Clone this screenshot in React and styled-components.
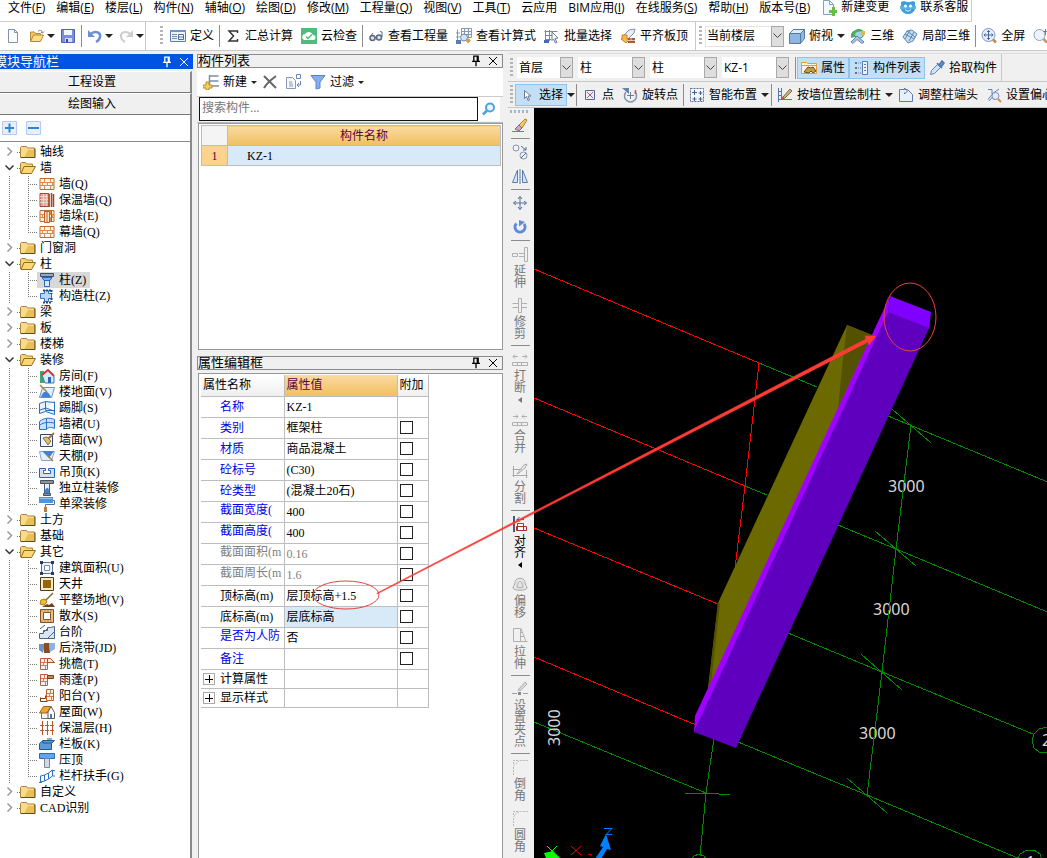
import React from 'react';
import styled, { createGlobalStyle } from 'styled-components';

const GlobalStyle = createGlobalStyle`
  * { box-sizing: border-box; }
  html, body, #root { height: 100%; }
  body {
    margin: 0;
    overflow: hidden;
    background: #f0f0f0;
    color: #000;
    font: 12px/16px "Open Sans", "Noto Sans CJK SC", sans-serif;
  }
  button, input, select { font: inherit; color: inherit; margin: 0; }
  ul { list-style: none; margin: 0; padding: 0; }
`;

const song = '"Liberation Serif", "Noto Sans CJK SC", serif';

/* ---------- icons ---------- */

const bricks = (
  <>
    <path d="M1 2.5h14v11H1z" fill="#fff3e6" stroke="#c06a2c" />
    <path d="M1 6.5h14M1 9.5h14M5.5 3v3M11.5 3v3M8.5 7v3M3.5 7v3M13.5 7v3M5.5 10v3M11.5 10v3" stroke="#d98c55" fill="none" />
  </>
);

const balcony = (
  <>
    <path d="M1.5 2.5h7v11h-7z" fill="#fff0e4" stroke="#b8622f" />
    <path d="M2 6.5h6M2 9.5h6M5.5 3v3M4.5 7v3M6.5 10v3" stroke="#cf8050" fill="none" />
  </>
);

const glyphs = {
  page: <path d="M3.5 1.5h6l3 3v10h-9zM9.5 1.5v3h3" fill="#fdfeff" stroke="#7f93ab" />,
  open: (
    <>
      <path d="M1.5 13V4h4l1 1.5h5V8" fill="#f3c765" stroke="#b58a34" />
      <path d="M1.5 13.5 4.5 7h10l-3 6.500z" fill="#ffdc86" stroke="#b58a34" />
      <path d="M9 3.5c2-2 4-1 4.5 1M12 4l1.5 1L15 3.5" stroke="#6c7f94" fill="none" />
    </>
  ),
  save: (
    <>
      <path d="M1.5 1.5h13v13h-13z" fill="#7a90dc" stroke="#5064b4" />
      <path d="M4 2h8v5H4z" fill="#f4f7ff" />
      <path d="M5 10h7v4H5z" fill="#d7dcf0" />
      <path d="M6 11h2v3H6z" fill="#3a4a92" />
    </>
  ),
  undo: (
    <>
      <path d="M4 5.5c5-3 10-1 9 3.5-.5 2.5-2 4-4 5" stroke="#6b8fd4" strokeWidth="2.5" fill="none" />
      <path d="M1 2v7h7z" fill="#6b8fd4" />
    </>
  ),
  redo: (
    <>
      <path d="M12 5.5C7 2.5 2 4.5 3 9c.5 2.5 2 4 4 5" stroke="#cdcdcd" strokeWidth="2" fill="none" />
      <path d="M15 2v7H8z" fill="#cdcdcd" />
    </>
  ),
  define: (
    <>
      <path d="M.5 2.5h15v11H.5z" fill="#eef4fd" stroke="#5f7db4" />
      <path d="M0 2h16v2H0z" fill="#6a92d8" />
      <path d="M2 6.5h5M2 8.5h5M2 10.5h5" stroke="#7d8ea8" />
      <path d="M8.5 6.500h5v5h-5zM9 9h4" fill="#fff" stroke="#4a6ab0" />
    </>
  ),
  sigma: <path d="M12.5 5V3H4l4.500 5L4 13h8.500v-2" fill="none" stroke="#333" strokeWidth="1.5" />,
  cloud: (
    <>
      <path d="M0 0h16v16H0z" fill="#4fbb7c" />
      <path d="M4.5 12a3 3 0 0 1-.5-6 4.500 4.500 0 0 1 8 1 2.500 2.500 0 0 1 0 5z" fill="#fff" />
      <path d="m5 8.500 2 2 4-4" stroke="#4fbb7c" strokeWidth="1.5" fill="none" />
    </>
  ),
  glasses: (
    <>
      <circle cx="4.500" cy="10" r="2.500" fill="#dce6f0" stroke="#5c6978" strokeWidth="1.5" />
      <circle cx="11" cy="9.500" r="2.500" fill="#dce6f0" stroke="#5c6978" strokeWidth="1.5" />
      <path d="M7 10l2-1M2 9l3-4M14 9V4l-2-.5" stroke="#5c6978" fill="none" />
    </>
  ),
  formula: (
    <>
      <path d="M1.5 1.5v12M5.5.5h10v9h-10z" fill="#f7fafe" stroke="#8a98ac" />
      <path d="M6 3.5h9M8.5 1v8M12.5 1v8M6 6.500h9M0 5h4M0 9h4" stroke="#8a98ac" />
      <circle cx="8" cy="9.500" r="3.500" fill="#cfe4f7" stroke="#6c88ac" />
      <path d="M0 12h5v4H0z" fill="#5c79bc" />
      <path d="m12 10 3 2.500-3 3-2-2.500z" fill="#d79a4a" />
    </>
  ),
  batch: (
    <>
      <path d="M1.5 2v12M.5 3.500h13M1 7.500h7M1 11.500h6M5.500 2v11" stroke="#7487a4" fill="none" />
      <path d="M0 12h5v3H0z" fill="#4b68b8" />
      <path d="m8 4 6 6-3 .5 2 4-1.500.5-2-4L8 12.500z" fill="#fff" stroke="#6d7a90" />
    </>
  ),
  level: (
    <>
      <path d="m3 8 6-6 6-1-1 4-6 6z" fill="#e8edf6" stroke="#8092ac" />
      <path d="M2 7h5v4h3l-4 4-5-4h1z" fill="#f6b94b" stroke="#c98424" />
      <path d="M8 10h7v5H8z" fill="#a35c3c" />
      <path d="M8 12.500h7M11 10v2" stroke="#e8c6b2" />
    </>
  ),
  cube: (
    <>
      <path d="m.5 5.500 4-4h11v9l-4 5H.5z" fill="#8db7e2" stroke="#557ba4" />
      <path d="m.5 5.500 4-4h11l-4 4z" fill="#dcecfb" stroke="#557ba4" />
      <path d="M11.5 5.500v10" stroke="#557ba4" />
    </>
  ),
  orbit: (
    <>
      <circle cx="9" cy="6" r="4.500" fill="#9ed8dc" stroke="#3f8f68" />
      <path d="M1 6c3-6 12-6 14-1-3-2-8-2-10 1v3L1 10z" fill="#54a964" />
      <path d="m1 14 6-6 7 6-2 1.500-5-4-4 4z" fill="#a9c2e6" stroke="#6884b4" />
      <path d="M11 3h4v4h-4z" fill="#e6b450" />
    </>
  ),
  partial: (
    <>
      <path d="m1 9 4-6 5-1 5 4-4 7-5 2z" fill="#c3dcf4" stroke="#5f86b4" />
      <path d="m3 6 9 5M5 3l8 6M8 2l-5 9M12 4l-5 9" stroke="#5f86b4" fill="none" />
    </>
  ),
  full: (
    <>
      <circle cx="7.500" cy="7" r="6.500" fill="#e4edfa" stroke="#8396b8" />
      <path d="M7.500 2.500v9M3 7h9M6 4l1.500-1.500L9 4M6 10l1.500 1.500L9 10M4.500 5.500 3 7l1.500 1.500M10.500 5.500 12 7l-1.500 1.500" stroke="#4868a4" fill="none" />
      <path d="m12 11.500 3 3" stroke="#c2894e" strokeWidth="2.500" />
    </>
  ),
  zoomIn: (
    <>
      <circle cx="6.500" cy="7" r="5.500" fill="#edf4fb" stroke="#8ea2bd" />
      <path d="M10 3.500h6M12.500 1v6" stroke="#6a7fa4" />
      <path d="m10.500 11 3.500 3.500" stroke="#cb9557" strokeWidth="2.500" />
    </>
  ),
  change: (
    <>
      <path d="M2.500.5h6l4 4v10h-10zM8.500.5v4h4" fill="#f2f9fe" stroke="#7ca4c4" />
      <path d="M8 10h3V7h3v3h2v3h-2v3h-3v-3H8z" fill="#65c043" />
    </>
  ),
  service: (
    <>
      <path d="m1 2 3-1 3 1h3l3-1 2 1v6c0 4-4 6-7 6s-7-2-7-6z" fill="#3d9ee0" />
      <path d="M0 6h16v3H0z" fill="#57b0ea" />
      <circle cx="5.500" cy="6" r="1.500" fill="#fff" />
      <circle cx="10.500" cy="6" r="1.500" fill="#fff" />
      <path d="M5 9.500c2 2 4 2 6 0" stroke="#fff" fill="none" />
    </>
  ),
  props: (
    <>
      <path d="M.5 13.500v-11h5l1 1h9v10z" fill="#fff3d8" stroke="#e59c35" />
      <path d="M1 5.500h14" stroke="#e59c35" />
      <path d="m3 12 4-5 3 1 2-1 3 4-3 2-2-2-2 2z" fill="#c4a03c" stroke="#5c5030" />
    </>
  ),
  list: (
    <>
      <path d="M2 2h2v2H2zM2 7h2v2H2zM2 12h2v2H2z" fill="#5f7290" />
      <path d="M5 3h3M5 8h3M5 13h3" stroke="#5f7290" strokeDasharray="1 1" />
      <path d="M9.500 1.500h5v13h-5z" fill="#eef4fd" stroke="#5878b4" />
      <path d="M11 4.500h2M11 7.500h2M11 10.500h2" stroke="#5878b4" />
    </>
  ),
  pick: (
    <>
      <path d="m1.500 14.500 1-4 6-6 3 3-6 6z" fill="#cfe3f5" stroke="#6486ac" />
      <path d="m8 3 5 5M10 5l3-4 2 2-3 4z" stroke="#4d78b0" strokeWidth="1.5" fill="#6b98d0" />
    </>
  ),
  cursor: <path d="M5.500 3.500v8l2-2 1.500 4 1.500-.5-1.500-4h3z" fill="#fff" stroke="#6d7c92" />,
  point: (
    <>
      <path d="M3.500 3.500h9v9h-9z" fill="#eaf0fa" stroke="#4e68a2" />
      <path d="m5 5 6 6M11 5l-6 6" stroke="#cf5564" />
    </>
  ),
  rotatePoint: (
    <>
      <path d="M4 5a6 6 0 1 0 9 0" stroke="#8292ac" strokeWidth="1.5" fill="none" />
      <path d="M0 1h7v6z" fill="#6681ac" />
      <path d="M8.500 5v7M5 8.500h7" stroke="#6b7890" />
      <path d="M13.500 3v4" stroke="#d44" strokeWidth="1.5" />
    </>
  ),
  smart: (
    <>
      <path d="M1.500 1.500h13v13h-13z" stroke="#5c6f8e" strokeDasharray="2 1" fill="#f4f8fd" />
      <path d="M5.500 3v5M3 5.500h5M11.500 4v4M9.500 6h4M5.500 10v4M3.500 12h4M11.500 10v4M9.500 12h4" stroke="#44608c" />
    </>
  ),
  drawWall: (
    <>
      <path d="M1.500 1v14M4.500 1v11M1 4.500h4M1 8.500h4M1 12.500h14" stroke="#5777b4" />
      <path d="m6 10 7-8 2 2-7 7-3 1z" fill="#c9b47c" stroke="#7c6e44" />
      <path d="m5 12 1-2" stroke="#d44" strokeWidth="2" />
    </>
  ),
  endAdjust: <path d="M1.500 14.500v-12h5V1l3 3-3 3V5.500M6.500 2.500h3l5 5v7h-13" fill="#eaf0fa" stroke="#6078b0" />,
  offset: (
    <>
      <path d="M2 2.500h4v5l-4 5M6 7l7-5M3 14l7-8M7 9h4v3H7z" stroke="#6480b2" fill="none" />
      <circle cx="9.500" cy="9" r="3.500" fill="#e2ecf8" stroke="#7f94b6" />
      <path d="m12 12 3 3" stroke="#cf9148" strokeWidth="2" />
    </>
  ),
  create: (
    <>
      <path d="M6.500 1v12M6.500 2h9M6.500 7h9M9 12h7" stroke="#7e8ea6" strokeWidth="1.5" />
      <path d="M3 8h3v3h3v3H6v2H3v-2H0v-3h3z" fill="#f5cf56" stroke="#b98f2a" />
    </>
  ),
  remove: <path d="M2 2c3 3 8 8 12 12M14 2C10 5 5 9 2 14" stroke="#666" strokeWidth="2" fill="none" />,
  copyTo: (
    <>
      <path d="M.5 3.500h6l3 3v8h-9zM3 10h4M3 12h4M3 8h3" fill="#f4f7fc" stroke="#8b98ae" />
      <path d="M10.500.5h4v4h-4zM14.500 7v4h-3m1.500-2-2 2 2 2" fill="none" stroke="#6c84b8" />
    </>
  ),
  filter: <path d="M1 1.500h14L10 8v6l-4 1V8z" fill="#86aef0" stroke="#5a82cc" />,
  search: (
    <>
      <circle cx="9" cy="6.500" r="4" fill="#eaf6fd" stroke="#4da3dc" strokeWidth="2" />
      <path d="m6 9.500-4 4" stroke="#4da3dc" strokeWidth="2.500" />
    </>
  ),
  pin: <path d="M5.500 2.500h5v6h-5zM9.500 2.500v6M3.500 8.500h9M8 9v5" fill="none" stroke="currentColor" strokeWidth="1.5" />,
  close: <path d="m4 4 8 8M12 4l-8 8" stroke="currentColor" />,
  plus: (
    <>
      <path d="M.5 1.500h14v13H.5z" fill="#e6eefc" stroke="#b9c9ee" />
      <path d="M3 8h9M7.500 3.500v9" stroke="#2c86c8" strokeWidth="2" />
    </>
  ),
  minus: (
    <>
      <path d="M.5 1.500h14v13H.5z" fill="#e6eefc" stroke="#b9c9ee" />
      <path d="M2 8h11" stroke="#2c86c8" strokeWidth="2" />
    </>
  ),
  folder: (
    <>
      <path d="M.5 13.500v-10l1-1h5l1 1.500h7v9.500z" fill="#f8dc8c" stroke="#a98738" />
      <path d="M8 6h7v8H4z" fill="#dca72e" opacity=".55" />
      <path d="M1 13.500h14v-9" stroke="#5e4a1c" fill="none" />
    </>
  ),
  folderOpen: (
    <>
      <path d="M.5 13V3.500l1-1h4l1 1.500h6V7" fill="#f6d47a" stroke="#a98738" />
      <path d="m1 13.500 3-7h11.500l-4 7z" fill="#fbd773" stroke="#8d6d22" />
    </>
  ),
  wall: bricks,
  insulWall: (
    <>
      <path d="M1 1.500h9v13H1z" fill="#e0a89a" stroke="#a04a3c" />
      <path d="M1 4.500h9M1 7.500h9M1 10.500h9M4.500 2v12M7.500 2v12" stroke="#f0d0c8" />
      <path d="M10 2v13M12.500 1v14M14.500 2v13" stroke="#9a4a24" strokeWidth="1.5" />
    </>
  ),
  pier: (
    <>
      {bricks}
      <path d="M5.500 3.500h5v11h-5z" fill="#fbe6d2" stroke="#c05c24" />
      <path d="M8 4v10M12.500 3v11" stroke="#c05c24" />
    </>
  ),
  column: (
    <>
      <path d="M1.500 1.500h13v3h-13z" fill="#9aa8bc" stroke="#3a4f70" />
      <path d="M5.500 5.500h5v9h-5z" fill="#dbe8fb" stroke="#2468c4" />
      <path d="M3 5.500h10l-2 3H5z" fill="#7eaef0" stroke="#2468c4" />
    </>
  ),
  tieColumn: (
    <>
      <path d="M5.500 2.500h4v3h3v5h-3v3h-4v-3h-4v-5h4z" fill="#bcd6f6" stroke="#3070c0" />
      <path d="M4 2.500h8M4 14.500h8M12.500 2v4M12.500 10v4" stroke="#23467e" strokeWidth="2" strokeDasharray="2 1" />
    </>
  ),
  room: (
    <>
      <path d="M1 3h4v12H1z" fill="#3fa768" />
      <path d="m3 7 6-5 6 6v7H6z" fill="#d7ecfb" stroke="#3678b4" />
      <path d="m3 7 6-5 6 6" stroke="#d43535" strokeWidth="2" fill="none" />
      <path d="M9 9h3v6H9z" fill="#2d67b8" />
    </>
  ),
  floor: (
    <>
      <path d="M3.500 3.500h12l-3 10H.5z" fill="#e3effd" stroke="#6c8ec0" />
      <path d="M2 13c2-7 7-7 10 0z" fill="#3f80d8" />
      <path d="m1 1 7 7" stroke="#a8823c" strokeWidth="1.5" />
    </>
  ),
  skirting: <path d="M.5 13.500v-10l6-2v9l9 .01v-9M6.500 1.500l9 1v12l-9-3-6 2M1 10l6-2 8 3" fill="#e6f1fd" stroke="#2970c4" />,
  dado: (
    <>
      <path d="M.5 5.500c5-4 10-4 15-2v9c-4-2-7-1-8 1H.5z" fill="#c8e2fb" stroke="#2970c4" />
      <path d="M1 9c4-3 9-3 14-2M7.500 3v10" stroke="#2970c4" fill="none" />
    </>
  ),
  wallFace: (
    <>
      <path d="M1.500 2.500h12v12h-12z" fill="#f2f6fd" stroke="#39486a" />
      <path d="m15 1-6 6" stroke="#9b7432" strokeWidth="2" />
      <path d="m4 6 4-1 4 4-3 4z" fill="#d8bd7c" stroke="#8b7238" />
    </>
  ),
  ceiling: (
    <>
      <path d="M.5 3.500h15l-3 9h-10z" fill="#e3effd" stroke="#87a4cf" />
      <path d="M3 3h12l-5 7z" fill="#3f80d8" />
      <path d="m8 7 6 6" stroke="#a8823c" strokeWidth="1.5" />
    </>
  ),
  hung: <path d="M.5 4.500h6v2h-2v3h7v-3h-2v-2h6v9H.5z" fill="#cfe4fb" stroke="#2266b8" />,
  soloColumn: (
    <>
      <path d="M1.500.5h13v3h-13zM4.500 13.500h7v2h-7z" fill="#8b929c" stroke="#44505e" />
      <path d="M5.500 3.500h5v10h-5z" fill="#e9eef6" stroke="#515c6c" />
      <path d="M6 10c2-3 3-3 4 0v3H6z" fill="#3f80d8" />
    </>
  ),
  beam: (
    <>
      <path d="M0 1h14v6H0z" fill="#4f93dc" />
      <path d="M1 2.500h12" stroke="#9dc4ef" />
      <path d="M14 4.500h1.500v4h-9v3" stroke="#5f6e80" fill="none" />
      <path d="M5 11h3v5H5z" fill="#b77d45" />
    </>
  ),
  area: (
    <>
      <path d="M2.500 2.500h11v11h-11z" fill="#edf3fb" stroke="#5d7495" />
      <path d="M5.500 5.500h5v5h-5z" fill="#fff" stroke="#7890b0" />
      <path d="M1 1h3v3H1zM12 1h3v3h-3zM1 12h3v3H1zM12 12h3v3h-3z" fill="#2a3b56" />
    </>
  ),
  patio: (
    <>
      <path d="M1.500 1.500h13v13h-13z" fill="#f6e8c8" stroke="#4f3c18" />
      <path d="M4 4h8v8H4z" fill="#946608" />
    </>
  ),
  site: (
    <>
      <path d="m14 1-8 8" stroke="#7a6a34" strokeWidth="1.5" />
      <path d="m2 8 4-1 2 3-3 3-4-1z" fill="#f2bf2f" stroke="#a47c14" />
      <path d="M3 15h13l-3-4-3 2-2-1z" fill="#6d4322" />
    </>
  ),
  apron: (
    <>
      <path d="M1.500 1.500h13v13h-13z" fill="#edc08a" stroke="#7f5426" />
      <path d="M4.500 4.500h7v7h-7z" fill="#fff" stroke="#7f5426" />
      <path d="M2 3h12M2 13h12" stroke="#b98850" strokeDasharray="2 1" />
    </>
  ),
  steps: (
    <>
      <path d="M.5 14.500v-5h4v-3h4v-3h3l4-1v12z" fill="#dce6f2" stroke="#4d6382" />
      <path d="m1 5 5-4M5 8l5-5M9 14l6-6" stroke="#4d6382" />
    </>
  ),
  pour: (
    <>
      <path d="M0 4h6l-2 9-4-3z" fill="#6f90c6" />
      <path d="M10 3h6v6l-5 3z" fill="#8fb0e4" />
      <path d="M5 3h5l1 10H5z" fill="#8a4a22" />
    </>
  ),
  eave: (
    <>
      {balcony}
      <path d="M8.500 2.500h3l4 4h-7z" fill="#fbe3d0" stroke="#99501f" />
    </>
  ),
  canopy: (
    <>
      {balcony}
      <path d="M8.500 3.500h6v3h-6z" fill="#c98555" stroke="#7c3c14" />
    </>
  ),
  balcony: (
    <>
      <g transform="translate(6 -1)">{balcony}</g>
      <path d="M1.500 9.500v4h7M1.500 10.500h5v-3" fill="none" stroke="#7c3c14" />
    </>
  ),
  roof: (
    <>
      <path d="M2.500 8h9v6.500h-9z" fill="#f3f3f3" stroke="#6e6e6e" />
      <path d="m.5 9 4-6.500H12l-4 6.500z" fill="#f2a532" stroke="#9f6312" />
      <path d="m12 2.500 3.500 6v6H9V8z" fill="#fff" stroke="#595959" />
      <path d="M11 10h2v5h-2z" fill="#4c78b0" />
    </>
  ),
  insulation: <path d="M3.500 1v14M8.500 1v14M13.500 1v14M1 5.500h14M1 10.500h14" stroke="#b9562c" strokeDasharray="4 1" />,
  slab: (
    <>
      <path d="M.5 7.500 4 4.500h11.500l-3 3v6H.5z" fill="#5d99d8" stroke="#27588e" />
      <path d="M4 4.500V7h9M8 3h5" stroke="#27588e" fill="none" />
    </>
  ),
  coping: (
    <>
      <path d="M.5 1.500h15v5H.5z" fill="#62a5ea" stroke="#2a6ab4" />
      <path d="M5.500 6.500h5v9h-5z" fill="#d5d8dc" stroke="#7c8692" />
    </>
  ),
  rail: <path d="M1.500 14V8l4-1v6zM5.500 7l4-2v6l-4 2M9.500 5l4-3v6l-4 3M12 2.500h4M13.500 8h2.500M0 14.500h3" stroke="#2b6fc8" fill="none" />,
  brush: (
    <>
      <path d="m7 8 6-6 2 1-5 8z" fill="#f2c968" stroke="#a88432" />
      <path d="m3 12 4-4 3 3-3 3z" fill="#e3a2b4" stroke="#6b6b9c" />
      <path d="M0 14.500h12" stroke="#6480b4" />
    </>
  ),
  copyShape: (
    <>
      <circle cx="4" cy="4" r="3" fill="#eef3f8" stroke="#8093ab" />
      <circle cx="11.500" cy="11.500" r="3.500" fill="#eef3f8" stroke="#8093ab" />
      <path d="m9 2 5 4m0-3v3h-3M9 14l5-5" stroke="#566c8c" fill="none" />
    </>
  ),
  mirror: <path d="M.5 14.500 5.500 2v12.500zM15.500 14.500 10.500 2v12.500zM8 1v15" fill="#d5e4f8" stroke="#5d7cac" />,
  move: <path d="M8 1.500v13M1.500 8h13M6 4l2-2.500L10 4M6 12l2 2.500 2-2.500M4 6 1.500 8 4 10M12 6l2.500 2-2.500 2" stroke="#54739c" fill="none" />,
  rotate: (
    <>
      <path d="M4.500 4.500a5 5 0 1 0 7.500.5" stroke="#5d8bdc" strokeWidth="3" fill="none" />
      <path d="M7 1v6.500L13 3z" fill="#5d8bdc" />
    </>
  ),
  extend: <path d="M12.500 1.500h3v14h-3zM.5 7.500h5v3h-5zM7 7.500h5M7 10.500h5" stroke="#b0b0b0" fill="none" />,
  trim: <path d="M6.500 1.500h3v14h-3zM.5 6.500h6M.5 10.500h6M10 6.500h5M10 10.500h5" stroke="#b0b0b0" fill="none" />,
  breakApart: <path d="M1 5.500h5M3 3.500l-2 2 2 2M10 5.500h5M13 3.500l2 2-2 2M.5 11.500h15v3H.5zM5.500 12v3M9.500 12v3" stroke="#b0b0b0" fill="none" />,
  merge: <path d="M1 5.500h5M4 3.500l2 2-2 2M10 5.500h5M12 3.500l-2 2 2 2M.5 11.500h15v3H.5zM5.500 12v3M9.500 12v3" stroke="#b0b0b0" fill="none" />,
  split: <path d="M1.500 4v11M.5 7.500h9M.5 13.500h15M14.500 8v8M5 12l7-9 3-1-2 4-6 5z" stroke="#a8a8a8" fill="none" />,
  align: (
    <>
      <path d="M2 0v16" stroke="#445d74" strokeWidth="2" />
      <path d="M5.500 7.500h6v7h-6z" fill="#fff" stroke="#4050c0" />
      <path d="M4.500 10.500h10v4h-10z" fill="none" stroke="#a83030" />
      <path d="M5 3.500h7M7.500 1 5 3.500 7.500 6" stroke="#4050c0" fill="none" />
    </>
  ),
  offsetCurve: <path d="M1 12c0-2 2-3 2-6 1-5 9-5 10 0 0 3 2 4 2 6-1 3-13 3-14 0zM5 11c0-2 1-2 1-4 1-2 3-2 4 0 0 2 1 2 1 4-1 1-5 1-6 0z" stroke="#a8a8a8" fill="#e6e6e6" />,
  stretch: <path d="M1.500 1.500h7v13h-7zM9 1.500l5 13M8.500 14.500h7M9 5.500h2M9 9.500h3" stroke="#b0b0b0" fill="none" />,
  grip: (
    <>
      <path d="m6 9 7-8 2 2-7 7z" fill="#d9d9d9" stroke="#b0b0b0" />
      <path d="M0 12.500h5M11 12.500h5" stroke="#a0a0a0" />
      <path d="M6 11h3v3H6z" fill="#8a8a8a" />
    </>
  ),
  chamfer: <path d="M1.500 16V7l6-5.500H16M1.500 5V1.500H6" stroke="#b8b8b8" fill="none" strokeDasharray="2 1" />,
  fillet: <path d="M1.500 16v-6c0-5 3-8.500 8-8.500H16M1.500 5V1.500H6" stroke="#b8b8b8" fill="none" strokeDasharray="2 1" />,
};

const Svg = styled.svg`
  flex: none;
  display: block;
`;

const Icon = ({ name, size = 16 }) => (
  <Svg width={size} height={size} viewBox="0 0 16 16" fill="none" aria-hidden="true">
    {glyphs[name]}
  </Svg>
);

/* ---------- menu and tool bars ---------- */

const Page = styled.div`
  height: 100vh;
  display: flex;
  flex-direction: column;
  position: relative;
  overflow: hidden;
`;

const MenuBar = styled.nav`
  flex: none;
  height: 22px;
  background: #fff;
`;

const MenuItems = styled.div`
  width: max-content;
  height: 22px;
  padding: 0 3px 6px 8px;
  display: flex;
  align-items: center;
  gap: 11px;
  border-right: 1px solid #ccc;
  border-bottom: 1px solid #ccc;
`;

const MenuButton = styled.button`
  border: 0;
  padding: 0;
  background: none;
  display: flex;
  gap: 4px;
  line-height: 14px;
  white-space: nowrap;
`;

const Bar = styled.div`
  flex: none;
  display: flex;
  align-items: center;
  height: ${({ height }) => height || 28}px;
  background: ${({ white }) => (white ? '#fff' : '#f0f0f0')};
  border-bottom: 1px solid #c8c8c8;
  overflow: hidden;
`;

const Group = styled.div`
  display: flex;
  align-items: center;
  align-self: stretch;
  flex: none;
  padding: 0 ${({ end }) => end || 0}px 0 1px;
  border-right: ${({ open }) => (open ? '0' : '1px solid #c8c8c8')};
`;

const Grip = styled.span`
  flex: none;
  width: 3px;
  height: 20px;
  margin: 0 ${({ after }) => after || 3}px 0 ${({ before }) => before || 2}px;
  background: repeating-linear-gradient(#b4b4b4 0 2px, transparent 2px 4px);
`;

const Divider = styled.span`
  flex: none;
  width: 1px;
  height: 22px;
  margin: 0 1px;
  background: #8c8c8c;
`;

const ToolButton = styled.button`
  flex: none;
  display: flex;
  align-items: center;
  gap: ${({ bare }) => (bare ? 2 : 4)}px;
  height: 22px;
  padding: 0 ${({ menu }) => (menu ? 1 : 4)}px 0 4px;
  border: 0;
  box-shadow: ${({ active }) => (active ? 'inset 0 0 0 1px #8ec3ee' : 'none')};
  background: ${({ active }) => (active ? '#c2dff5' : 'transparent')};
  white-space: nowrap;
`;

const Caret = styled.i`
  border: solid transparent;
  border-width: 4px 4px 0;
  border-top-color: #222;
`;

const SplitArrow = styled.button`
  flex: none;
  border: 0;
  padding: 0;
  height: 22px;
  background: none;
  display: flex;
  align-items: center;
`;

const Tool = ({ icon, children, menu, active }) => (
  <ToolButton
    type="button"
    bare={children ? undefined : 1}
    menu={menu ? 1 : undefined}
    active={active ? 1 : undefined}
    aria-label={children ? undefined : icon}
  >
    <Icon name={icon} />
    {children}
    {menu && <Caret />}
  </ToolButton>
);

const ComboBox = styled.label`
  flex: none;
  display: grid;
  grid-template-columns: 1fr 13px;
  width: ${({ width }) => width}px;
  height: 21px;
  margin-right: ${({ framed }) => (framed ? 1 : 5)}px;
  background: #fff;
  box-shadow: ${({ framed }) => (framed ? 'inset 0 0 0 1px #e4e4e4' : 'none')};

  select {
    grid-area: 1 / 1 / 2 / 3;
    appearance: none;
    border: 0;
    padding: 0 2px;
    background: none;
    outline: 0;
  }
`;

const ComboArrow = styled.span`
  grid-area: 1 / 2;
  pointer-events: none;
  background: #dedede;
  border: 1px solid #a8a8a8;
  display: grid;
  place-items: center;
`;

const Combo = ({ label, value, width, framed }) => (
  <ComboBox width={width} framed={framed ? 1 : undefined}>
    <select aria-label={label} defaultValue={value}>
      <option>{value}</option>
    </select>
    <ComboArrow>
      <svg width="9" height="6" viewBox="0 0 9 6">
        <path d="m.5.5 4 4 4-4" fill="none" stroke="#444" />
      </svg>
    </ComboArrow>
  </ComboBox>
);

/* ---------- docked panels ---------- */

const Main = styled.main`
  flex: 1;
  min-height: 0;
  display: flex;
  padding-top: 2px;
`;

const Nav = styled.aside`
  flex: none;
  width: 199px;
  margin: 1px 4px 0 -6px;
  display: flex;
  flex-direction: column;
`;

const TitleBar = styled.h2`
  flex: none;
  display: flex;
  align-items: center;
  height: ${({ blue }) => (blue ? 15 : 14)}px;
  margin: 0;
  font: 400 13px/14px ${song};
  color: ${({ blue }) => (blue ? '#fff' : '#000')};
  background: ${({ blue }) => (blue ? '#0054e3' : '#f0f0f0')};
  border: ${({ blue }) => (blue ? '0' : '1px solid #8a8a8a')};

  span { flex: 1; }
`;

const TitleButton = styled.button`
  border: 0;
  padding: 0 1px;
  background: none;
  height: 14px;
  display: flex;
  align-items: center;
`;

const Title = ({ children, blue }) => (
  <TitleBar blue={blue ? 1 : undefined}>
    <span>{children}</span>
    <TitleButton type="button" aria-label="pin"><Icon name="pin" size={14} /></TitleButton>
    <TitleButton type="button" aria-label="close"><Icon name="close" /></TitleButton>
  </TitleBar>
);

const NavButton = styled.button`
  flex: none;
  height: 22px;
  margin-right: 1px;
  padding: 0;
  border: solid #fff;
  border-width: 1px 2px 1px 0;
  border-right-color: #8a8a8a;
  border-bottom-color: #777;
  background: #f0f0f0;
  font: 12px/16px ${song};

  &:first-of-type { margin-top: 2px; }
`;

const TreeTools = styled.div`
  flex: none;
  display: flex;
  gap: 8px;
  height: 27px;
  padding: 5px 0 0 8px;
  background: #fff;
  border-right: 2px solid #8a8a8a;
  border-bottom: 1px solid #8a8a8a;
  margin-right: 1px;

  button { border: 0; padding: 0; background: none; height: 16px; }
`;

const Tree = styled.ul`
  && { padding: 2px 0 0 8px; }
  flex: 1;
  background: #fff;
  border-right: 2px solid #8a8a8a;
  margin-right: 1px;
  font: 12px/16px ${song};
  overflow: hidden;
`;

const TreeRow = styled.div`
  display: flex;
  align-items: center;
  height: 16px;
  white-space: nowrap;
`;

const Toggle = styled.button`
  flex: none;
  width: 12px;
  height: 16px;
  margin: 0 3px 0 0;
  padding: 0 0 0 2px;
  border: 0;
  background: none;
`;

const Stub = styled.span`
  width: 3px;
  height: 1px;
  background: repeating-linear-gradient(90deg, #777 0 1px, transparent 1px 2px);
`;

const Rail = styled.span`
  width: 1px;
  height: 16px;
  margin: 0 18px 0 7px;
  background: repeating-linear-gradient(#777 0 1px, transparent 1px 2px);
`;

const Branch = styled.span`
  width: 9px;
  height: 16px;
  background:
    repeating-linear-gradient(90deg, #777 0 1px, transparent 1px 2px) 0 8px / 100% 1px no-repeat,
    repeating-linear-gradient(#777 0 1px, transparent 1px 2px) 0 0 / 1px ${({ last }) => (last ? '50%' : '100%')} no-repeat;
`;

const TreeLabel = styled.span`
  display: flex;
  gap: 4px;
  height: 16px;
  padding: 0 4px 0 ${({ leaf }) => (leaf ? 2 : 0)}px;
  background: ${({ selected }) => (selected ? '#d8d8d8' : 'transparent')};
`;

const tree = [
  ['轴线'],
  ['墙', [['wall', '墙(Q)'], ['insulWall', '保温墙(Q)'], ['pier', '墙垛(E)'], ['wall', '幕墙(Q)']]],
  ['门窗洞'],
  ['柱', [['column', '柱(Z)', true], ['tieColumn', '构造柱(Z)']]],
  ['梁'],
  ['板'],
  ['楼梯'],
  ['装修', [
    ['room', '房间(F)'], ['floor', '楼地面(V)'], ['skirting', '踢脚(S)'], ['dado', '墙裙(U)'],
    ['wallFace', '墙面(W)'], ['ceiling', '天棚(P)'], ['hung', '吊顶(K)'],
    ['soloColumn', '独立柱装修'], ['beam', '单梁装修'],
  ]],
  ['土方'],
  ['基础'],
  ['其它', [
    ['area', '建筑面积(U)'], ['patio', '天井'], ['site', '平整场地(V)'], ['apron', '散水(S)'],
    ['steps', '台阶'], ['pour', '后浇带(JD)'], ['eave', '挑檐(T)'], ['canopy', '雨蓬(P)'],
    ['balcony', '阳台(Y)'], ['roof', '屋面(W)'], ['insulation', '保温层(H)'], ['slab', '栏板(K)'],
    ['coping', '压顶'], ['rail', '栏杆扶手(G)'],
  ]],
  ['自定义'],
  ['CAD识别'],
];

const TreeNode = ({ label, items }) => (
  <li>
    <TreeRow>
      <Toggle type="button" aria-label={label} aria-expanded={!!items}>
        <svg width="9" height="9" viewBox="0 0 9 9" fill="none">
          {items
            ? <path d="m.5 2.500 4 4 4-4" stroke="#333" strokeWidth="1.5" />
            : <path d="m2.500.5 4 4-4 4" stroke="#999" strokeWidth="1.5" />}
        </svg>
      </Toggle>
      <Stub />
      <TreeLabel><Icon name={items ? 'folderOpen' : 'folder'} />{label}</TreeLabel>
    </TreeRow>
    {items && (
      <ul>
        {items.map(([icon, text, selected], i) => (
          <li key={text}>
            <TreeRow>
              <Rail />
              <Branch last={i === items.length - 1 ? 1 : undefined} />
              <TreeLabel leaf={1} selected={selected ? 1 : undefined}><Icon name={icon} />{text}</TreeLabel>
            </TreeRow>
          </li>
        ))}
      </ul>
    )}
  </li>
);

const Middle = styled.div`
  flex: none;
  width: 306px;
  margin: 1px 5px 0 0;
  display: flex;
  flex-direction: column;
`;

const Panel = styled.section`
  display: flex;
  flex-direction: column;
  height: ${({ height }) => height || 'auto'};
  flex: ${({ grow }) => (grow ? 1 : 'none')};
  margin-bottom: ${({ grow }) => (grow ? 0 : 6)}px;
`;

const PanelTools = styled.div`
  flex: none;
  display: flex;
  align-items: center;
  height: 29px;
  padding-left: 2px;
  background: #fff;
  border-bottom: 1px solid #ccc;

  i { border-width: 3px 3px 0; }
`;

const SearchRow = styled.div`
  flex: none;
  display: flex;
  height: 26px;
  padding: 0 3px 1px 2px;
  background: #f0f0f0;
  border-bottom: 1px solid #bbb;

  input {
    flex: 1;
    min-width: 0;
    border: 1px solid #111;
    padding: 0 2px 3px;
    outline: 0;
    font-size: 12px;
  }

  input::placeholder { color: #777; opacity: 1; }

  button { border: 0; background: #fff; width: 22px; padding: 0 3px; }
`;

const PanelBody = styled.div`
  flex: 1;
  min-height: 0;
  margin: ${({ flush }) => (flush ? 3 : 0)}px 0 0 1px;
  padding: 1px 1px 0 2px;
  background: #fff;
  border: solid #999;
  border-width: 1px 1px ${({ flush }) => (flush ? 0 : 1)}px 1px;
`;

const gold = 'linear-gradient(#fadaa2, #f0c060)';

const ListTable = styled.table`
  width: 100%;
  border-collapse: collapse;
  table-layout: fixed;
  font: 12px/16px ${song};

  th, td { height: 20px; padding: 0; border: 1px solid #bdbdbd; font-weight: 400; }
  thead th { background: ${gold}; color: #600040; }
  thead th:first-child { width: 26px; background: #f4f4f4; }
  tbody th { background: #fbd38c; color: #600040; }
  td { background: #d8eaf8; padding-left: 19px; }
`;

const PropTable = styled.table`
  width: 227px;
  border-collapse: collapse;
  table-layout: fixed;
  font: 12px/16px ${song};

  th, td {
    height: 21px;
    padding: 0 0 0 2px;
    border: 1px solid #bdbdbd;
    border-top: 0;
    border-left: 0;
    text-align: left;
    font-weight: 400;
    white-space: nowrap;
    overflow: hidden;
  }

  thead th { background: linear-gradient(#fff, #efefef); }
  thead th:nth-child(2) { background: ${gold}; color: #600040; }
`;

const NameCell = styled.th`
  && { padding-left: 19px; ${({ clipped }) => clipped && 'vertical-align: top;'} }
  color: ${({ tone }) => tone};
`;

const ValueCell = styled.td`
  color: ${({ tone }) => (tone === '#808080' ? tone : '#000')};
  background: ${({ current }) => (current ? '#d8eaf8' : 'transparent')};
`;

const GroupRow = styled.tr`
  && th, && td { height: 19px; }
  div { display: flex; align-items: center; gap: 5px; height: 18px; }
`;

const Expander = styled.button`
  width: 12px;
  height: 12px;
  padding: 0;
  border: 1px solid #aaa;
  background: #fff;
  display: grid;
  place-items: center;
`;

const Check = styled.input`
  appearance: none;
  display: block;
  width: 13px;
  height: 13px;
  border: 1px solid #222;
  background: #fff;

  &:checked { background: #222; }
`;

const blue = '#0000e8';
const grey = '#808080';
const properties = [
  { name: '名称', value: 'KZ-1', tone: blue, bare: true },
  { name: '类别', value: '框架柱', tone: blue },
  { name: '材质', value: '商品混凝土', tone: blue },
  { name: '砼标号', value: '(C30)', tone: blue },
  { name: '砼类型', value: '(混凝土20石)', tone: blue },
  { name: '截面宽度(', value: '400', tone: blue, clipped: 1 },
  { name: '截面高度(', value: '400', tone: blue, clipped: 1 },
  { name: '截面面积(m', value: '0.16', tone: grey, clipped: 1 },
  { name: '截面周长(m', value: '1.6', tone: grey, clipped: 1 },
  { name: '顶标高(m)', value: '层顶标高+1.5', tone: '#000' },
  { name: '底标高(m)', value: '层底标高', tone: '#000', current: 1 },
  { name: '是否为人防', value: '否', tone: blue, clipped: 1 },
  { name: '备注', value: '', tone: blue },
];

/* ---------- drawing area ---------- */

const Workspace = styled.div`
  flex: 1;
  min-width: 0;
  display: flex;
  flex-direction: column;
  border-top: 1px solid #ddd;
`;

const DrawRow = styled.div`
  flex: 1;
  min-height: 0;
  display: flex;
`;

const SideBar = styled.div`
  flex: none;
  width: 26px;
  padding: 2px 2px 0 0;
  display: flex;
  flex-direction: column;
  align-items: center;
  overflow: hidden;
`;

const SideGrip = styled.span`
  flex: none;
  width: 20px;
  height: 3px;
  background: repeating-linear-gradient(90deg, #b4b4b4 0 2px, transparent 2px 4px);
`;

const SideDivider = styled.span`
  flex: none;
  width: 19px;
  height: 1px;
  margin: 1px 0;
  background: #8c8c8c;
`;

const SideButton = styled.button`
  flex: none;
  display: flex;
  flex-direction: column;
  align-items: center;
  gap: 3px;
  padding: 4px 2px;
  border: 0;
  background: none;
  color: ${({ enabled }) => (enabled ? '#000' : '#777')};
  line-height: 12px;

  span { width: 12px; word-break: break-all; }
`;

const SideCaret = styled.i`
  border: solid transparent;
  border-width: 3px 4px 3px 0;
  border-right-color: currentColor;
`;

const sideTools = [
  ['brush'], null, ['copyShape'], ['mirror'], null, ['move'], ['rotate'], null,
  ['extend', '延伸'], ['trim', '修剪'], null,
  ['breakApart', '打断', 1], ['merge', '合并'], ['split', '分割'], null,
  ['align', '对齐', 1, 1], ['offsetCurve', '偏移'], ['stretch', '拉伸'], null,
  ['grip', '设置夹点'], null, ['chamfer', '倒角'], ['fillet', '圆角'],
];

const Viewport = styled.div`
  flex: 1;
  min-width: 0;
  background: #000;
  overflow: hidden;

  svg { display: block; width: 100%; height: 100%; }
  text { font: 16px "Noto Sans", "Liberation Sans", sans-serif; fill: #d8d8d8; }
`;

const Annotation = styled.svg`
  position: absolute;
  inset: 0;
  width: 100%;
  height: 100%;
  pointer-events: none;
`;

const Scene = () => (
  <svg role="img" aria-label="三维">
    <g transform="translate(-534 -108)">
      <g stroke="#008a00" fill="none" shapeRendering="crispEdges">
        <path d="M759 363 817 387M745 486 767 495M534 722 706 793" />
        <path d="M888 416 1050 483M838 525 896 549 1050 613M788 633 882 672 1033 734M738 742 867 795 1020 859" />
        <path d="M892 409 931 443M875 531 916 566M861 654 902 690M847 778 887 813" />
        <path d="M714 738 706 793 700 856M685 793H707L730 795" />
        <path d="m1047 727-8 2-5 5-2 6 2 8 5 4 8 1" />
        <path d="m1016 862 4-8 7-4h7l6 4 3 8M690 860l4-4 5-2 5 2 3 4" />
      </g>
      <path
        d="M534 269 759 363 745 486 735 568M534 398 745 486M534 528 718 604M534 657 696 725"
        stroke="#f00"
        fill="none"
        shapeRendering="crispEdges"
      />
      <path d="m847 325-129 278-10 86 10-4 120-270 34-80z" fill="#6b6900" />
      <path d="m847 325 25 10-34 74 5-51z" fill="#545200" />
      <path d="m718 603-10 86 3-4 9-82z" fill="#545200" />
      <path d="M890 296 888 314 694 733l1-17z" fill="#9f00ff" />
      <path d="m890 296 41 16-2 17-41-16z" fill="#8000ff" />
      <path d="m888 312 41 16-193 420-42-16z" fill="#5e00be" />
      <text x="888" y="492">3000</text>
      <text x="873" y="615">3000</text>
      <text x="859" y="739">3000</text>
      <text x="1042" y="746">2</text>
      <text x="1026" y="868">1</text>
      <text transform="translate(560 746) rotate(-90)">3000</text>
      <path d="M911 425 896 549 882 672 867 795" stroke="#008a00" fill="none" shapeRendering="crispEdges" />
      <path d="m547 846 5 5 5-5M552 851v4" stroke="#0f0" fill="none" />
      <path d="m544 853 9-2 7 7h-14z" fill="#0f0" />
      <path d="m571 846 10 9M581 846l-10 9M588 854l4 1" stroke="#e00" />
      <path d="M604 828.500h8l-6 6h6" stroke="#0080ff" fill="none" />
      <path d="M606 834 600 846l3 1-8 12h6l6-10 4 1z" fill="#0080ff" />
    </g>
  </svg>
);

/* ---------- app ---------- */

const menus = [
  ['文件', 'F'], ['编辑', 'E'], ['楼层', 'L'], ['构件', 'N'], ['辅轴', 'O'], ['绘图', 'D'], ['修改', 'M'],
  ['工程量', 'Q'], ['视图', 'V'], ['工具', 'T'], ['云应用'], ['BIM应用', 'I'], ['在线服务', 'S'],
  ['帮助', 'H'], ['版本号', 'B'],
];

const App = () => (
  <>
    <GlobalStyle />
    <Page>
      <MenuBar>
        <MenuItems>
          {menus.map(([text, key]) => (
            <MenuButton type="button" key={text}>
              <span>{text}{key && <>(<u>{key}</u>)</>}</span>
            </MenuButton>
          ))}
          <MenuButton type="button"><Icon name="change" />新建变更</MenuButton>
          <MenuButton type="button"><Icon name="service" />联系客服</MenuButton>
        </MenuItems>
      </MenuBar>

      <Bar white={1} height={29}>
        <Group>
          <Tool icon="page" />
          <Tool icon="open" menu />
          <Tool icon="save" />
          <Divider />
          <Tool icon="undo" menu />
          <Tool icon="redo" menu />
        </Group>
        <Group end={3}>
          <Grip before={13} />
          <Tool icon="define">定义</Tool>
          <Divider />
          <Tool icon="sigma">汇总计算</Tool>
          <Tool icon="cloud">云检查</Tool>
          <Divider />
          <Tool icon="glasses">查看工程量</Tool>
          <Tool icon="formula">查看计算式</Tool>
          <Tool icon="batch">批量选择</Tool>
          <Tool icon="level">平齐板顶</Tool>
        </Group>
        <Group open={1}>
          <Grip />
          <Combo label="楼层范围" value="当前楼层" width={79} framed />
          <Tool icon="cube" menu>俯视</Tool>
          <Tool icon="orbit">三维</Tool>
          <Tool icon="partial">局部三维</Tool>
          <Divider />
          <Tool icon="full">全屏</Tool>
          <Tool icon="zoomIn" />
        </Group>
      </Bar>

      <Main>
        <Nav>
          <Title blue>模块导航栏</Title>
          <NavButton type="button">工程设置</NavButton>
          <NavButton type="button">绘图输入</NavButton>
          <TreeTools>
            <button type="button" aria-label="展开"><Icon name="plus" /></button>
            <button type="button" aria-label="折叠"><Icon name="minus" /></button>
          </TreeTools>
          <Tree>
            {tree.map(([label, items]) => <TreeNode key={label} label={label} items={items} />)}
          </Tree>
        </Nav>

        <Middle>
          <Panel height="296px">
            <Title>构件列表</Title>
            <PanelTools>
              <Tool icon="create" menu>新建</Tool>
              <Tool icon="remove" />
              <Tool icon="copyTo" />
              <Tool icon="filter" menu>过滤</Tool>
            </PanelTools>
            <SearchRow>
              <input type="text" aria-label="搜索构件" placeholder="搜索构件..." />
              <button type="button" aria-label="搜索"><Icon name="search" /></button>
            </SearchRow>
            <PanelBody>
              <ListTable>
                <thead><tr><th aria-label="序号" /><th>构件名称</th></tr></thead>
                <tbody><tr><th>1</th><td>KZ-1</td></tr></tbody>
              </ListTable>
            </PanelBody>
          </Panel>

          <Panel grow={1}>
            <Title>属性编辑框</Title>
            <PanelBody flush={1}>
              <PropTable>
                <colgroup><col width="83" /><col width="113" /><col width="31" /></colgroup>
                <thead><tr><th>属性名称</th><th>属性值</th><th>附加</th></tr></thead>
                <tbody>
                  {properties.map((p) => (
                    <tr key={p.name}>
                      <NameCell tone={p.tone} clipped={p.clipped}>{p.name}</NameCell>
                      <ValueCell tone={p.tone} current={p.current}>{p.value}</ValueCell>
                      <td>{!p.bare && <Check type="checkbox" aria-label={p.name} />}</td>
                    </tr>
                  ))}
                  {['计算属性', '显示样式'].map((name) => (
                    <GroupRow key={name}>
                      <th>
                        <div>
                          <Expander type="button" aria-label={name}>
                            <svg width="8" height="8"><path d="M0 4.500h8M4.500 0v8" stroke="#000" /></svg>
                          </Expander>
                          {name}
                        </div>
                      </th>
                      <td />
                      <td />
                    </GroupRow>
                  ))}
                </tbody>
              </PropTable>
            </PanelBody>
          </Panel>
        </Middle>

        <Workspace>
          <Bar>
            <Group>
              <Grip before={1} after={4} />
              <Combo label="楼层" value="首层" width={56} />
              <Combo label="构件大类" value="柱" width={67} />
              <Combo label="构件类型" value="柱" width={67} />
              <Combo label="构件" value="KZ-1" width={67} />
              <Divider />
              <Tool icon="props" active>属性</Tool>
              <Tool icon="list" active>构件列表</Tool>
              <Tool icon="pick">拾取构件</Tool>
            </Group>
          </Bar>
          <Bar height={26}>
            <Group open={1}>
              <Grip before={1} after={2} />
              <Tool icon="cursor" active>选择</Tool>
              <SplitArrow type="button" aria-label="选择方式"><Caret /></SplitArrow>
              <Divider />
              <Tool icon="point">点</Tool>
              <Tool icon="rotatePoint">旋转点</Tool>
              <Divider />
              <Tool icon="smart" menu>智能布置</Tool>
              <Divider />
              <Tool icon="drawWall" menu>按墙位置绘制柱</Tool>
              <Tool icon="endAdjust">调整柱端头</Tool>
              <Tool icon="offset">设置偏心柱</Tool>
            </Group>
          </Bar>
          <DrawRow>
            <SideBar>
              <SideGrip />
              {sideTools.map((t, i) => (t ? (
                <SideButton type="button" key={i} enabled={t[3]} aria-label={t[1] || t[0]}>
                  <Icon name={t[0]} />
                  {t[1] && <span>{t[1]}</span>}
                  {t[2] && <SideCaret />}
                </SideButton>
              ) : <SideDivider key={i} />))}
            </SideBar>
            <Viewport><Scene /></Viewport>
          </DrawRow>
        </Workspace>
      </Main>

      <Annotation aria-hidden="true">
        <g fill="none" stroke="#e8413c">
          <ellipse cx="346" cy="595" rx="33" ry="14" />
          <ellipse cx="910" cy="317" rx="26" ry="34" />
        </g>
        <path d="m377 593 489-254-1-3 11 0-7 9-1-3L377 594z" fill="#ff3b36" stroke="#ff3b36" strokeWidth=".5" />
      </Annotation>
    </Page>
  </>
);

export default App;
